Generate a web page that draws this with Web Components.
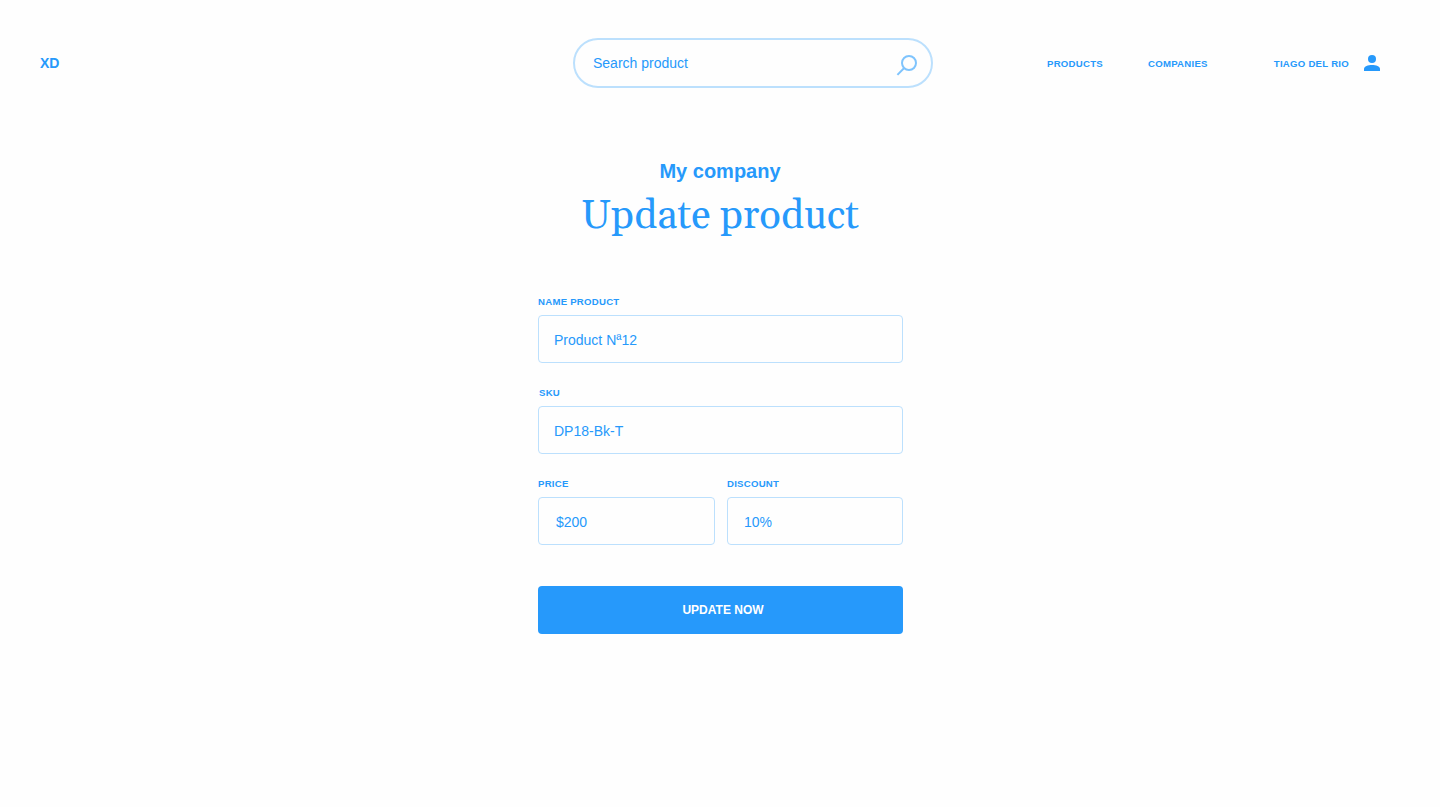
<!DOCTYPE html>
<html lang="en">
<head>
<meta charset="utf-8">
<title>Update product</title>
<style>
html,body{margin:0;height:100%;background:#fefefe}
body{font-family:"Liberation Sans",Arial,sans-serif;color:#2699fb;--line:#bce0fd;--blue:#2699fb;overflow:hidden}
</style>
</head>
<body>
<product-page></product-page>
<script>
const define = (name, html) => customElements.define(name, class extends HTMLElement {
  constructor() {
    super();
    this.attachShadow({ mode: 'open' }).innerHTML = html;
  }
});

define('nav-link', `<style>
:host{display:block;font-size:9.6px;letter-spacing:.26px;font-weight:700;line-height:12px;padding-top:2px;white-space:nowrap}
</style><slot></slot>`);

define('search-box', `<style>
:host{display:flex;align-items:center;justify-content:space-between;box-sizing:border-box;width:360px;height:50px;padding:0 13px 0 18px;border:2px solid var(--line);border-radius:25px;font-size:14px;line-height:16px}
svg{display:block;margin-top:4px}
</style><span><slot></slot></span>
<svg width="22" height="22" viewBox="0 0 22 22" fill="none" stroke="#7fc4fd" stroke-width="2"><circle cx="13" cy="9" r="7"/><path d="M8.2 14 1.400 20.9"/></svg>`);

define('user-badge', `<style>
:host{display:flex;align-items:center}
svg{display:block;margin-left:15px}
</style><nav-link><slot></slot></nav-link>
<svg width="16" height="16" viewBox="0 0 16 16" fill="#2699fb"><circle cx="8" cy="4" r="4"/><path d="M0 16v-2c0-2.7 4-4 8-4s8 1.300 8 4v2z"/></svg>`);

define('top-bar', `<style>
:host{display:flex;align-items:center;height:50px;padding:38px 60px 0 40px}
b{font-size:14px;line-height:16px;width:533px}
nav{display:flex;flex:1;align-items:center;padding-left:114px}
nav-link{width:101px}
user-badge{margin-left:auto}
</style><b>XD</b><search-box>Search product</search-box>
<nav><nav-link>PRODUCTS</nav-link><nav-link>COMPANIES</nav-link><user-badge>TIAGO DEL RIO</user-badge></nav>`);

define('page-heading', `<style>
:host{display:block;text-align:center}
h2{margin:0;font-size:20px;line-height:24px}
h1{margin:10px 0 0;font:400 40px/48px Georgia,Gelasio,"Liberation Serif",serif}
</style><h2><slot name="company"></slot></h2><h1><slot></slot></h1>`);

define('form-field', `<style>
:host{display:block;min-width:0}
.label{font-size:9.6px;letter-spacing:.26px;line-height:12px;font-weight:700;padding-left:var(--label-inset,0)}
.box{box-sizing:border-box;height:48px;margin-top:7px;padding:1px 0 0 var(--inset,15px);border:1px solid var(--line);border-radius:4px;display:flex;align-items:center;font-size:14px;line-height:16px}
</style><div class="label"><slot name="label"></slot></div><div class="box"><span><slot></slot></span></div>`);

define('action-button', `<style>
:host{display:block}
button{display:block;width:100%;height:48px;margin:0;padding:0 0 0 5px;border:0;border-radius:4px;background:var(--blue);color:#fff;font:700 12px/14px "Liberation Sans",Arial,sans-serif}
</style><button><slot></slot></button>`);

define('product-form', `<style>
:host{display:flex;flex-direction:column;gap:24px;width:365px}
.row{display:grid;grid-template-columns:177px 176px;gap:12px}
.sku{--label-inset:1px}
.price{--inset:17px}
.discount{--inset:16px}
action-button{margin-top:17px}
</style>
<form-field><span slot="label">NAME PRODUCT</span>Product Nª12</form-field>
<form-field class="sku"><span slot="label">SKU</span>DP18-Bk-T</form-field>
<div class="row">
<form-field class="price"><span slot="label">PRICE</span>$200</form-field>
<form-field class="discount"><span slot="label">DISCOUNT</span>10%</form-field>
</div>
<action-button>UPDATE NOW</action-button>`);

define('product-page', `<style>
:host{display:block}
page-heading{margin-top:71px}
product-form{margin:55px 0 0 538px}
</style><top-bar></top-bar>
<page-heading><span slot="company">My company</span>Update product</page-heading>
<product-form></product-form>`);
</script>
</body>
</html>
